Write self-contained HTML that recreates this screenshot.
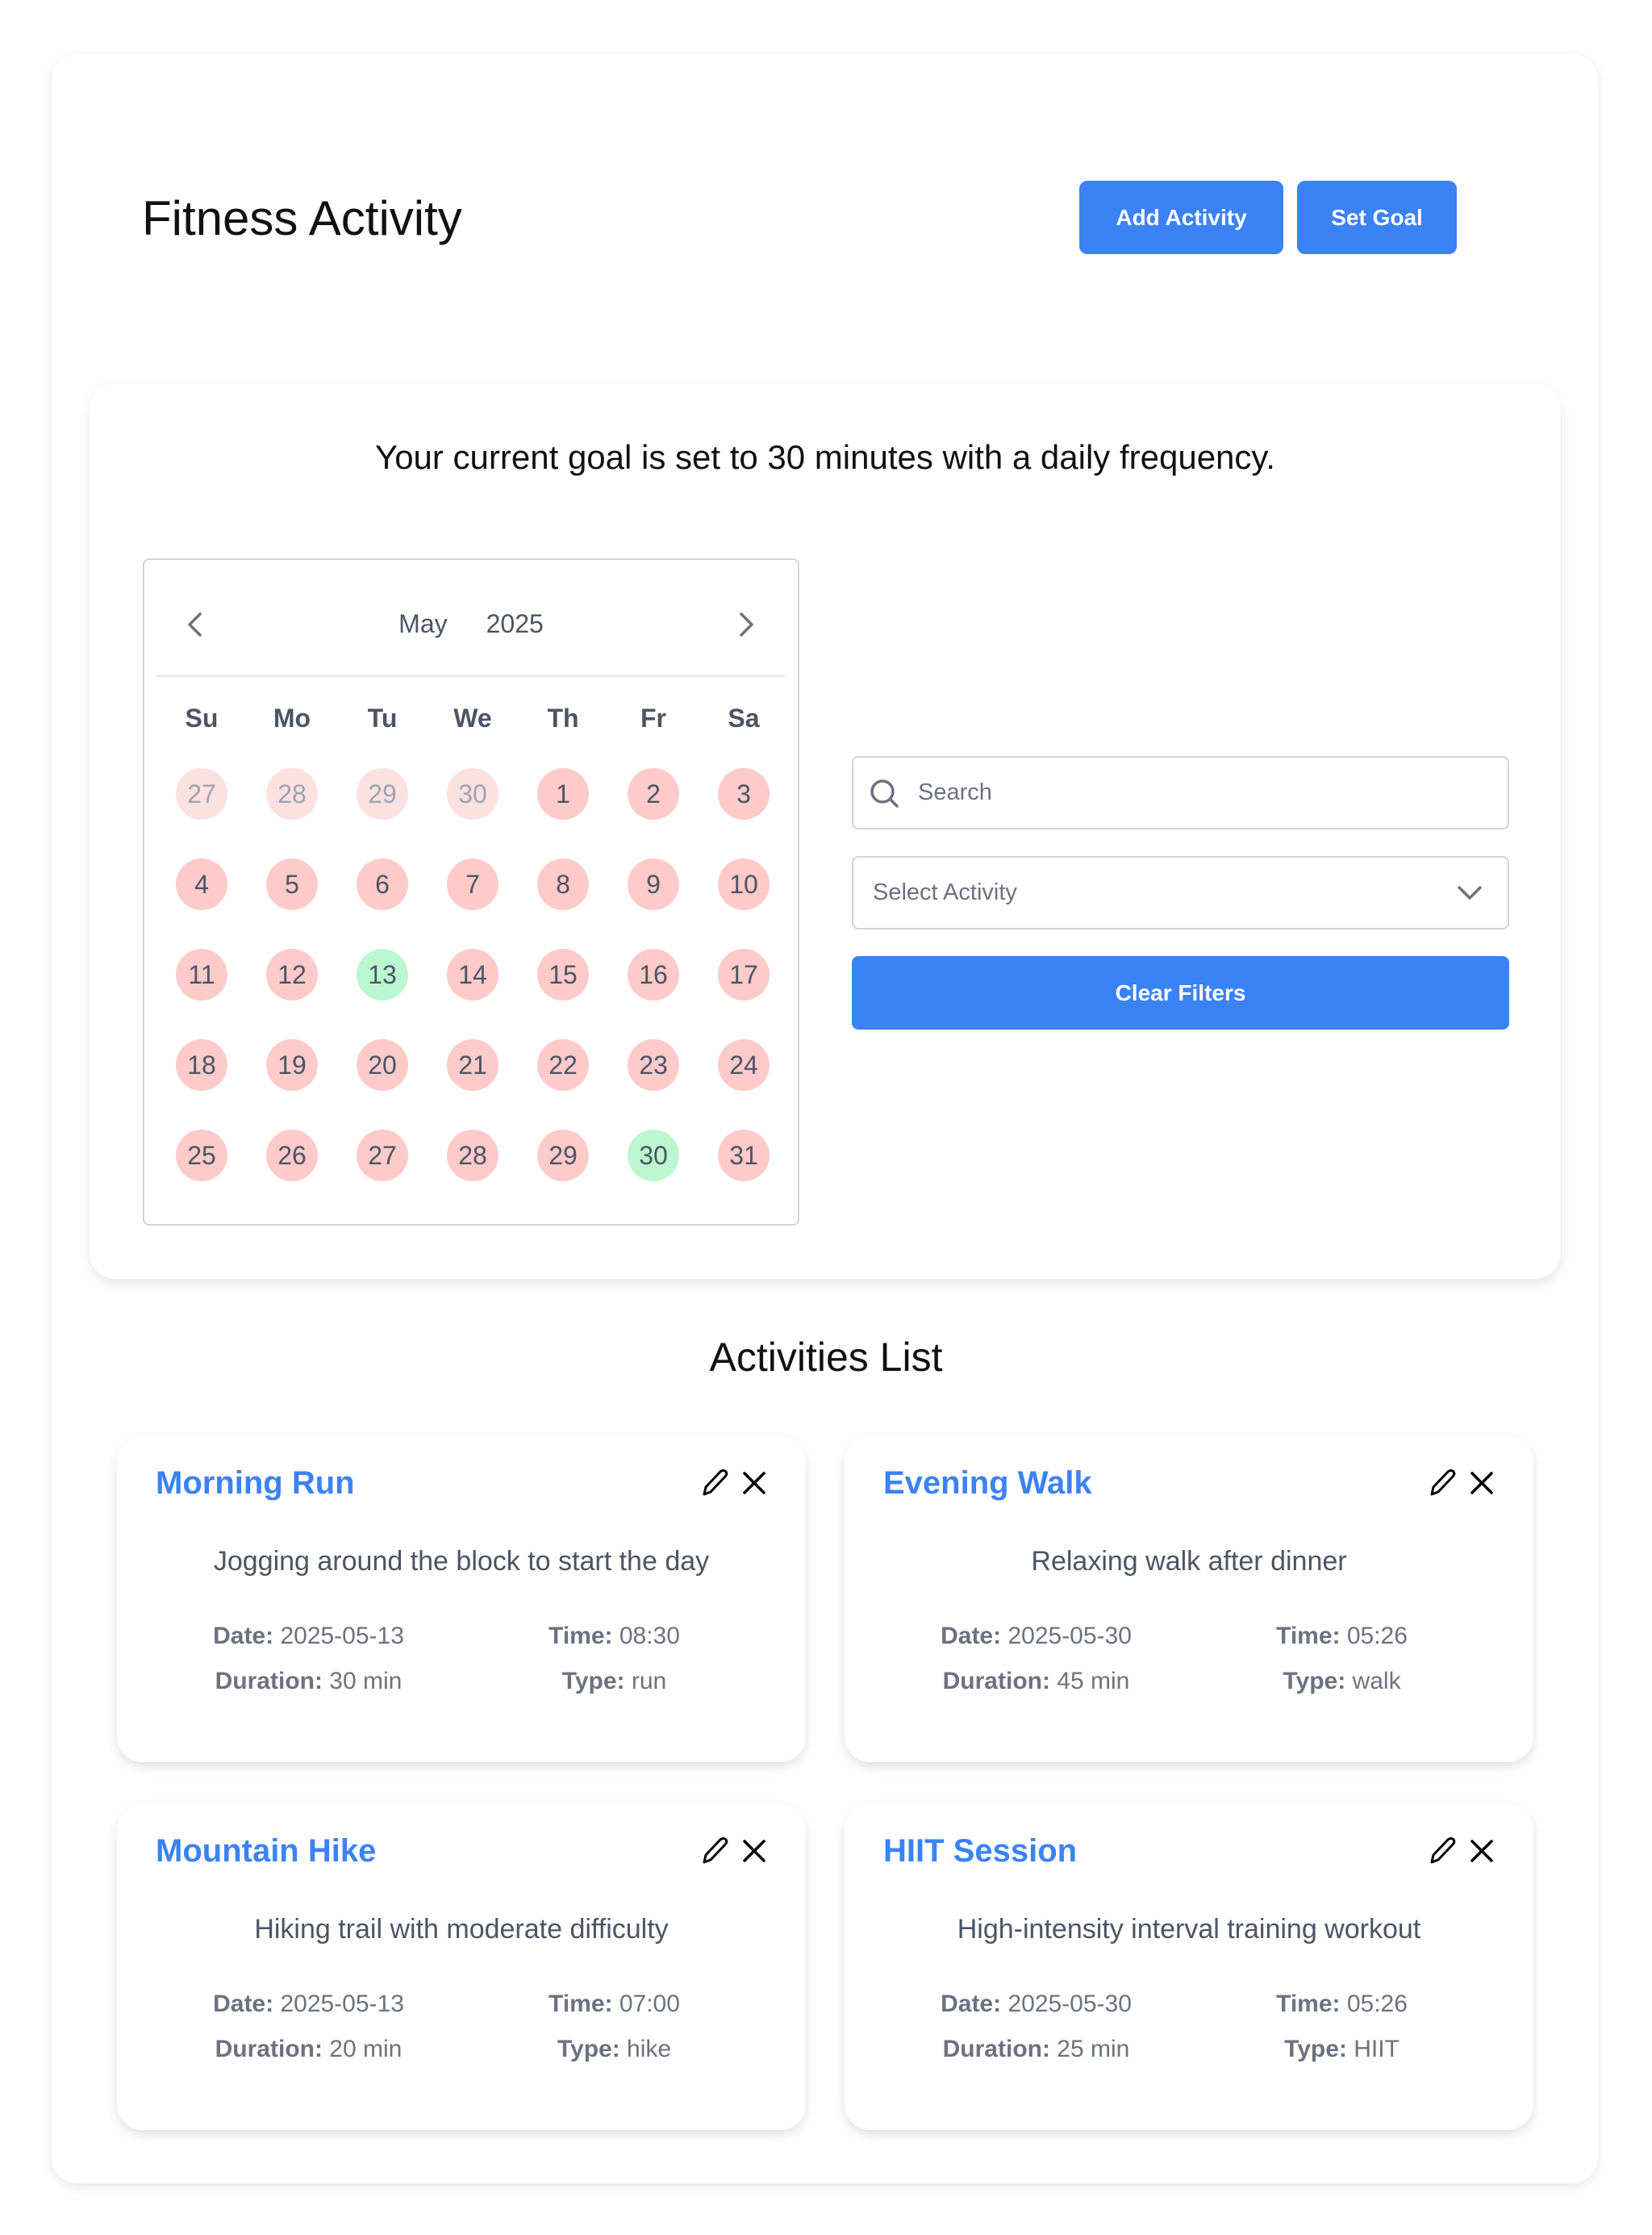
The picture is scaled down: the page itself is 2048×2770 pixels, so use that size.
<!DOCTYPE html>
<html><head><meta charset="utf-8"><style>
*{box-sizing:border-box;margin:0;padding:0}
body{width:2048px;height:2770px;background:#fff;font-family:"Liberation Sans",sans-serif;position:relative;overflow:hidden}
.abs{position:absolute}
.outer{left:64px;top:67px;width:1917px;height:2639px;border-radius:32px;background:#fff;box-shadow:0 4px 14px rgba(0,0,0,0.10)}
h1{position:absolute;left:176px;top:236px;font-size:60px;font-weight:400;color:#111;line-height:70px}
.btn{position:absolute;background:#3b82f6;color:#fff;font-weight:700;font-size:28px;border-radius:10px;display:flex;align-items:center;justify-content:center}
.goal{left:111px;top:475px;width:1824px;height:1110px;border-radius:32px;background:#fff;box-shadow:0 6px 14px rgba(0,0,0,0.10)}
.goaltxt{left:111px;width:1824px;top:542px;text-align:center;font-size:42px;color:#111;line-height:50px}
.cal{left:177px;top:692px;width:814px;height:827px;border:2px solid #d1d5db;border-radius:8px;background:#fff}
.hdr{left:177px;width:814px;top:752px;text-align:center;font-size:32px;color:#4b5563;line-height:42px;font-weight:500}
.wd{position:absolute;width:80px;margin-left:-40px;text-align:center;font-size:32px;font-weight:700;color:#4b5563;top:870px;line-height:40px}
.d{position:absolute;width:64px;height:64px;margin-left:-32px;margin-top:-32px;border-radius:50%;background:#fecaca;color:#4b5563;font-size:32px;line-height:64px;text-align:center}
.d.p{background:#fde0e0;color:#9ca3af}
.d.g{background:#bbf7d0}
.inp{position:absolute;left:1056px;width:815px;height:91px;border:2px solid #d1d5db;border-radius:8px;background:#fff;font-size:29px;color:#6b7280;line-height:87px}
.card{position:absolute;width:854px;height:404px;border-radius:32px;background:#fff;box-shadow:0 6px 14px rgba(0,0,0,0.12)}
.card .t{position:absolute;left:48px;top:30px;font-size:40px;color:#3b82f6;font-weight:700;line-height:56px}
.card .ic{position:absolute;left:724px;top:38px}
.card .ds{position:absolute;left:0;width:100%;top:133px;text-align:center;font-size:34px;color:#4b5563;line-height:44px}
.card .g{position:absolute;left:48px;right:48px;top:228px;display:grid;grid-template-columns:1fr 1fr;row-gap:16px;font-size:30px;color:#6b7280;text-align:center;line-height:40px}
.card .g b{color:#6b7280}
.al{left:0;width:2048px;top:1652px;text-align:center;font-size:50px;color:#111;line-height:60px}
</style></head><body>
<div class="abs outer"></div>
<h1>Fitness Activity</h1>
<div class="btn" style="left:1338px;top:224px;width:253px;height:91px">Add Activity</div>
<div class="btn" style="left:1608px;top:224px;width:198px;height:91px">Set Goal</div>

<div class="abs goal"></div>
<div class="abs goaltxt">Your current goal is set to 30 minutes with a daily frequency.</div>

<div class="abs cal"></div>
<svg class="abs" style="left:0;top:0" width="1000" height="900">
<polyline points="248,761 235,774 248,787" fill="none" stroke="#6b7280" stroke-width="3.5" stroke-linecap="round" stroke-linejoin="round"/>
<polyline points="919,761 932,774 919,787" fill="none" stroke="#6b7280" stroke-width="3.5" stroke-linecap="round" stroke-linejoin="round"/>
<line x1="194" y1="838" x2="973" y2="838" stroke="#e5e7eb" stroke-width="3"/>
</svg>
<div class="abs hdr"><span style="margin-right:48px">May</span>2025</div>
<div class="wd" style="left:250px">Su</div><div class="wd" style="left:362px">Mo</div><div class="wd" style="left:474px">Tu</div><div class="wd" style="left:586px">We</div><div class="wd" style="left:698px">Th</div><div class="wd" style="left:810px">Fr</div><div class="wd" style="left:922px">Sa</div>

<div class="d p" style="left:250px;top:984px">27</div><div class="d p" style="left:362px;top:984px">28</div><div class="d p" style="left:474px;top:984px">29</div><div class="d p" style="left:586px;top:984px">30</div><div class="d" style="left:698px;top:984px">1</div><div class="d" style="left:810px;top:984px">2</div><div class="d" style="left:922px;top:984px">3</div>
<div class="d" style="left:250px;top:1096px">4</div><div class="d" style="left:362px;top:1096px">5</div><div class="d" style="left:474px;top:1096px">6</div><div class="d" style="left:586px;top:1096px">7</div><div class="d" style="left:698px;top:1096px">8</div><div class="d" style="left:810px;top:1096px">9</div><div class="d" style="left:922px;top:1096px">10</div>
<div class="d" style="left:250px;top:1208px">11</div><div class="d" style="left:362px;top:1208px">12</div><div class="d g" style="left:474px;top:1208px">13</div><div class="d" style="left:586px;top:1208px">14</div><div class="d" style="left:698px;top:1208px">15</div><div class="d" style="left:810px;top:1208px">16</div><div class="d" style="left:922px;top:1208px">17</div>
<div class="d" style="left:250px;top:1320px">18</div><div class="d" style="left:362px;top:1320px">19</div><div class="d" style="left:474px;top:1320px">20</div><div class="d" style="left:586px;top:1320px">21</div><div class="d" style="left:698px;top:1320px">22</div><div class="d" style="left:810px;top:1320px">23</div><div class="d" style="left:922px;top:1320px">24</div>
<div class="d" style="left:250px;top:1432px">25</div><div class="d" style="left:362px;top:1432px">26</div><div class="d" style="left:474px;top:1432px">27</div><div class="d" style="left:586px;top:1432px">28</div><div class="d" style="left:698px;top:1432px">29</div><div class="d g" style="left:810px;top:1432px">30</div><div class="d" style="left:922px;top:1432px">31</div>

<div class="inp" style="top:937px;padding-left:80px">Search</div>
<svg class="abs" style="left:0;top:0" width="1200" height="1020"><circle cx="1094" cy="981" r="13" fill="none" stroke="#6b7280" stroke-width="3.5"/><line x1="1103.5" y1="990.5" x2="1112" y2="999" stroke="#6b7280" stroke-width="3.5" stroke-linecap="round"/></svg>
<div class="inp" style="top:1061px;padding-left:24px">Select Activity</div>
<svg class="abs" style="left:1780px;top:1080px" width="80" height="50"><polyline points="29,20 42,33 55,20" fill="none" stroke="#6b7280" stroke-width="3.5" stroke-linecap="round" stroke-linejoin="round"/></svg>
<div class="btn" style="left:1056px;top:1185px;width:815px;height:91px;border-radius:8px">Clear Filters</div>

<div class="abs al">Activities List</div>

<div class="card" style="left:145px;top:1780px">
<div class="t">Morning Run</div>
<svg class="ic" width="90" height="40" viewBox="0 0 90 40"><path d="M4 34 L6 25 L24 6 Q28 3 31 6 Q33 9 30 12 L12 31 Z" fill="none" stroke="#000" stroke-width="3" stroke-linejoin="round"/><path d="M54 8 L78 32 M78 8 L54 32" stroke="#000" stroke-width="3.5" stroke-linecap="round"/></svg>
<div class="ds">Jogging around the block to start the day</div>
<div class="g"><div><b>Date:</b> 2025-05-13</div><div><b>Time:</b> 08:30</div><div><b>Duration:</b> 30 min</div><div><b>Type:</b> run</div></div>
</div>
<div class="card" style="left:1047px;top:1780px">
<div class="t">Evening Walk</div>
<svg class="ic" width="90" height="40" viewBox="0 0 90 40"><path d="M4 34 L6 25 L24 6 Q28 3 31 6 Q33 9 30 12 L12 31 Z" fill="none" stroke="#000" stroke-width="3" stroke-linejoin="round"/><path d="M54 8 L78 32 M78 8 L54 32" stroke="#000" stroke-width="3.5" stroke-linecap="round"/></svg>
<div class="ds">Relaxing walk after dinner</div>
<div class="g"><div><b>Date:</b> 2025-05-30</div><div><b>Time:</b> 05:26</div><div><b>Duration:</b> 45 min</div><div><b>Type:</b> walk</div></div>
</div>
<div class="card" style="left:145px;top:2236px">
<div class="t">Mountain Hike</div>
<svg class="ic" width="90" height="40" viewBox="0 0 90 40"><path d="M4 34 L6 25 L24 6 Q28 3 31 6 Q33 9 30 12 L12 31 Z" fill="none" stroke="#000" stroke-width="3" stroke-linejoin="round"/><path d="M54 8 L78 32 M78 8 L54 32" stroke="#000" stroke-width="3.5" stroke-linecap="round"/></svg>
<div class="ds">Hiking trail with moderate difficulty</div>
<div class="g"><div><b>Date:</b> 2025-05-13</div><div><b>Time:</b> 07:00</div><div><b>Duration:</b> 20 min</div><div><b>Type:</b> hike</div></div>
</div>
<div class="card" style="left:1047px;top:2236px">
<div class="t">HIIT Session</div>
<svg class="ic" width="90" height="40" viewBox="0 0 90 40"><path d="M4 34 L6 25 L24 6 Q28 3 31 6 Q33 9 30 12 L12 31 Z" fill="none" stroke="#000" stroke-width="3" stroke-linejoin="round"/><path d="M54 8 L78 32 M78 8 L54 32" stroke="#000" stroke-width="3.5" stroke-linecap="round"/></svg>
<div class="ds">High-intensity interval training workout</div>
<div class="g"><div><b>Date:</b> 2025-05-30</div><div><b>Time:</b> 05:26</div><div><b>Duration:</b> 25 min</div><div><b>Type:</b> HIIT</div></div>
</div>
</body></html>
